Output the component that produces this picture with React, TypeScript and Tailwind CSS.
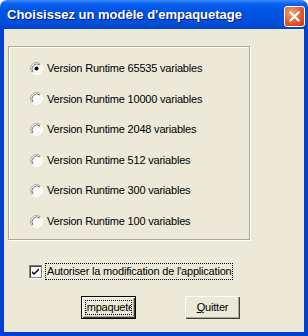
import React from "react";

const options = [
  "Version Runtime 65535 variables",
  "Version Runtime 10000 variables",
  "Version Runtime 2048 variables",
  "Version Runtime 512 variables",
  "Version Runtime 300 variables",
  "Version Runtime 100 variables",
];

const Radio = ({ checked }: { checked?: boolean }) => (
  <svg width="13" height="13" viewBox="0 0 13 13" className="shrink-0">
    <circle cx="6.5" cy="6.5" r="6" fill="#fff" />
    <path d="M2.25 10.75 A6 6 0 0 1 10.75 2.25" fill="none" stroke="#aca899" strokeWidth="1" />
    <path d="M10.75 2.25 A6 6 0 0 1 2.25 10.75" fill="none" stroke="#fff" strokeWidth="1" />
    <path d="M3 10 A5 5 0 0 1 10 3" fill="none" stroke="#716f64" strokeWidth="1" />
    <path d="M10 3 A5 5 0 0 1 3 10" fill="none" stroke="#f1efe2" strokeWidth="1" />
    {checked && <circle cx="6.5" cy="6.5" r="2" fill="#000" />}
  </svg>
);

const App = () => {
  return (
    <div className="w-[308px] h-[336px] flex flex-col font-['Liberation_Sans',Arial,sans-serif] text-[11px] tracking-[-0.2px] text-black select-none">
      <div className="h-[29px] shrink-0 flex items-center pl-[7px] pr-[3px] rounded-t-[7px] bg-[linear-gradient(to_bottom,#3c8cfe_0px,#0a5fef_4px,#0054e3_10px,#0050dd_22px,#0046c8_29px)]">
        <span className="flex-1 text-white font-bold text-[13px] tracking-[0px] [text-shadow:1px_1px_#0a1883]">
          Choisissez un modèle d'empaquetage
        </span>
        <div className="w-[21px] h-[21px] mt-[3px] rounded-[3px] border border-white bg-[radial-gradient(circle_at_35%_30%,#f0a080,#e2542a_60%,#c13a14)] flex items-center justify-center">
          <svg width="11" height="11" viewBox="0 0 11 11">
            <path d="M1.5 1.5 L9.5 9.5 M9.5 1.5 L1.5 9.5" stroke="#fff" strokeWidth="2.2" strokeLinecap="square" />
          </svg>
        </div>
      </div>
      <div className="flex-1 bg-[#ece9d8] border-l-4 border-r-4 border-b-4 border-[#0041d4] flex flex-col">
        <div className="ml-[4px] mt-[17px] w-[242px] h-[194px] border border-[#aca899] shadow-[inset_1px_1px_0_#fff,1px_1px_0_#fff] flex flex-col pt-[6px] pl-[21px]">
          {options.map((o, i) => (
            <div key={o} className="h-[30.6px] flex items-center gap-[4px]">
              <Radio checked={i === 0} />
              <span>{o}</span>
            </div>
          ))}
        </div>
        <div className="mt-[23px] pl-[25px] flex items-center gap-[3px]">
          <div className="w-[13px] h-[13px] bg-white border border-[#808080] shadow-[inset_1px_1px_0_#404040,1px_1px_0_#fff] flex items-center justify-center">
            <svg width="9" height="9" viewBox="0 0 9 9">
              <path d="M1 4 L3 6 L8 1 L8 3 L3 8 L1 6 Z" fill="#000" />
            </svg>
          </div>
          <span className="px-[1px] leading-[15px] border border-dotted border-black">
            Autoriser la modification de l'application
          </span>
        </div>
        <div className="mt-[16px] pl-[77px] flex gap-[49px]">
          <div className="w-[55px] h-[23px] border border-black bg-[#ece9d8] shadow-[inset_1px_1px_0_#fff,inset_-1px_-1px_0_#404040,inset_-2px_-2px_0_#aca899] p-[3px]">
            <div className="w-full h-full border border-dotted border-black flex items-center justify-center overflow-hidden whitespace-nowrap">
              <span><span className="underline">E</span>mpaqueter</span>
            </div>
          </div>
          <div className="w-[55px] h-[23px] bg-[#ece9d8] shadow-[inset_1px_1px_0_#fff,inset_-1px_-1px_0_#404040,inset_-2px_-2px_0_#aca899] flex items-center justify-center whitespace-nowrap">
            <span><span className="underline">Q</span>uitter</span>
          </div>
        </div>
      </div>
    </div>
  );
};

export default App;
